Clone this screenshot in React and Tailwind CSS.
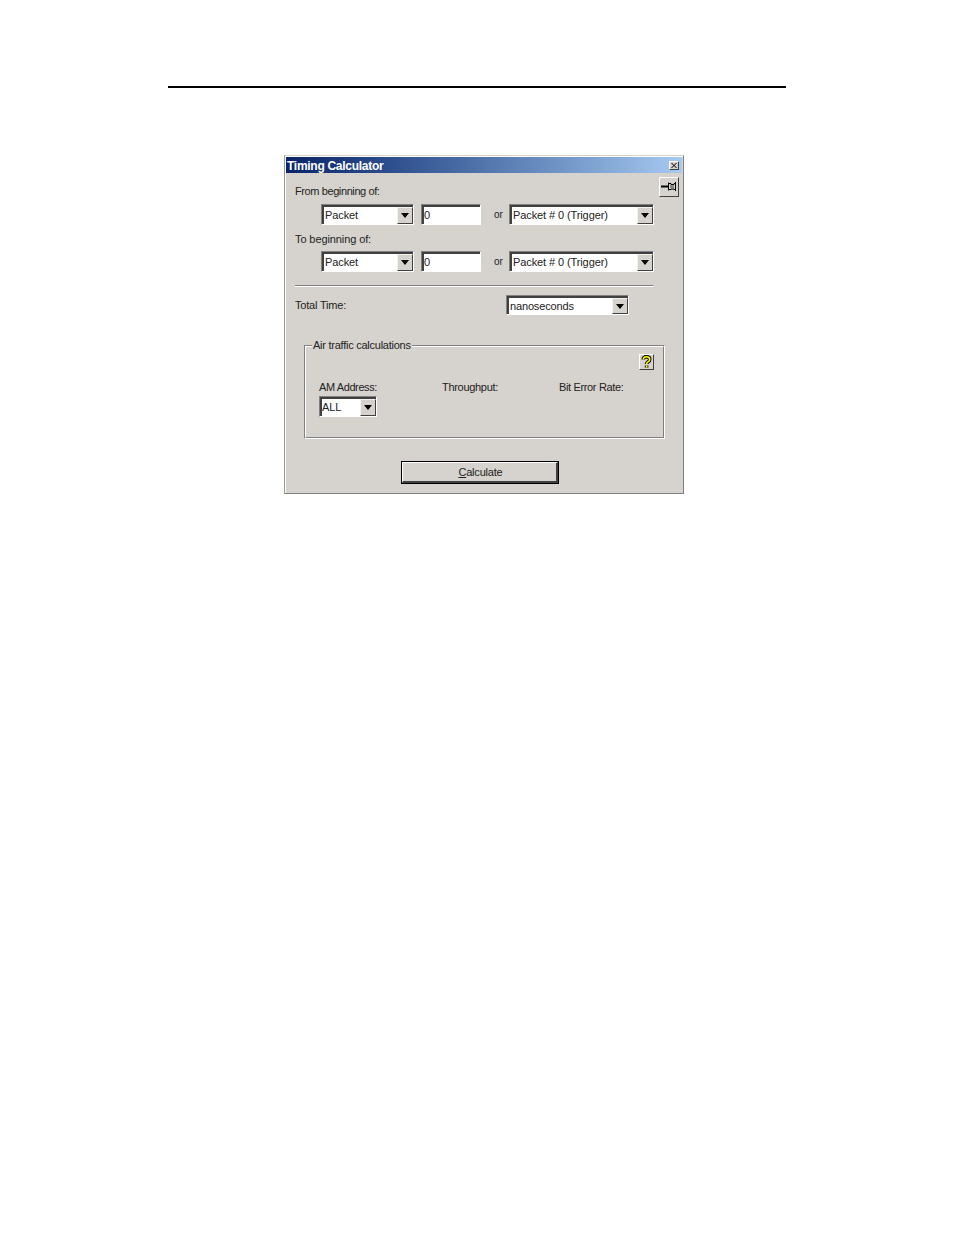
import React from "react";

const ui = "font-['Liberation_Sans',Arial,sans-serif]";
const face = "bg-[#d6d3ce]";
const raised = "border border-t-white border-l-white border-r-[#404040] border-b-[#404040]";

function Arrow() {
  return (
    <svg width="8" height="5" viewBox="0 0 8 5" className="block">
      <path d="M0 0h8L4 5z" fill="#000" />
    </svg>
  );
}

function Sunken({ className = "", children }) {
  return (
    <div className={`border border-t-[#808080] border-l-[#808080] border-r-white border-b-white ${className}`}>
      <div className="h-full border-t-2 border-l-2 border-t-[#404040] border-l-[#404040] bg-white flex items-center overflow-hidden">
        {children}
      </div>
    </div>
  );
}

function Combo({ value, className = "", textClass = "pl-[1px]", tracking = "tracking-[-0.1px]" }) {
  return (
    <Sunken className={className}>
      <span className={`flex-1 text-[11px] leading-none text-[#222] whitespace-nowrap ${tracking} ${textClass}`}>{value}</span>
      <div className={`w-4 h-full shrink-0 ${face} border border-t-[#f4f3ef] border-l-[#f4f3ef] border-r-[#404040] border-b-[#404040] flex items-center justify-center`}>
        <Arrow />
      </div>
    </Sunken>
  );
}

function Label({ children, className = "" }) {
  return <div className={`text-[11px] leading-[14px] text-[#222] whitespace-nowrap ${className}`}>{children}</div>;
}

function Row({ className = "" }) {
  return (
    <div className={`flex items-center h-[21px] ${className}`}>
      <Combo value="Packet" className="w-[93px] h-[21px] ml-[26px]" />
      <Sunken className="w-[60px] h-[21px] ml-[7px]">
        <span className="text-[11px] leading-none text-[#222]">0</span>
      </Sunken>
      <span className="ml-[13px] w-[15px] text-[10px] leading-none text-[#222]">or</span>
      <Combo value="Packet # 0 (Trigger)" className="w-[145px] h-[21px]" />
    </div>
  );
}

export default function App() {
  return (
    <div className={`min-h-[1235px] bg-white pt-[86px] ${ui}`}>
      <div className="mx-[168px] h-[2px] bg-black" />
      <div className={`ml-[284px] mt-[67px] w-[400px] h-[339px] ${face} border border-t-[#d6d3ce] border-l-[#9a9890] border-r-[#808080] border-b-[#808080]`}>
        <div className="h-full border-t border-l border-t-white border-l-white pr-[1px] pb-[1px]">
          <div className="h-[16px] bg-gradient-to-r from-[#0a246a] to-[#a6caf0] flex items-center justify-between pl-[1px] pr-[3px]">
            <span className="pt-[1px] text-[12px] leading-none font-bold tracking-[-0.28px] text-white whitespace-nowrap">Timing Calculator</span>
            <div className={`w-[10px] h-[9px] ${face} ${raised} flex items-center justify-center`}>
              <svg width="6" height="5" viewBox="0 0 6 5" className="block">
                <path d="M0.5 0L5.5 5M5.5 0L0.5 5" stroke="#000" strokeWidth="1" />
              </svg>
            </div>
          </div>

          <div className="relative pl-[9px] pr-[28px] pt-[11px]">
            <div className={`absolute right-[3px] top-[4px] w-[20px] h-[20px] ${face} ${raised} flex items-center justify-center`}>
              <svg width="16" height="12" viewBox="0 0 16 12" className="block">
                <path d="M0 5.5h7" stroke="#000" strokeWidth="2" fill="none" />
                <path d="M7.5 1.5v8M14.5 1v9M8 2.5h2V3.5h3V2.5h1M8 8.5h2V8h3v.5h1" stroke="#000" strokeWidth="1" fill="none" />
                <path d="M9 4h4v3H9z" fill="#8c8a80" />
              </svg>
            </div>

            <Label className="tracking-[-0.4px]">From beginning of:</Label>
            <Row className="mt-[6px]" />
            <Label className="mt-[7px] tracking-[-0.1px]">To beginning of:</Label>
            <Row className="mt-[5px]" />
            <div className="mt-[13px] mr-[1px] h-[2px] border-t border-t-[#808080] border-b border-b-white" />
            <div className="flex items-center h-[20px] mt-[8px]">
              <Label className="w-[211px] tracking-[-0.2px]">Total Time:</Label>
              <Combo value="nanoseconds" tracking="tracking-[-0.15px]" className="w-[123px] h-[20px]" />
            </div>
          </div>

          <div className="relative ml-[18px] mt-[30px] w-[361px] h-[94px] border border-t-[#808080] border-l-[#808080] border-r-white border-b-white">
            <div className="h-full border border-t-white border-l-white border-r-[#808080] border-b-[#808080] pl-[13px]">
              <div className={`absolute left-[7px] top-[-8px] px-[1px] ${face} text-[11px] leading-[14px] tracking-[-0.25px] text-[#222] whitespace-nowrap`}>Air traffic calculations</div>
              <div className="flex justify-end pr-[9px] pt-[7px]">
                <div className={`w-[15px] h-[16px] ${face} ${raised} flex items-center justify-center`}>
                  <svg width="11" height="14" viewBox="0 0 11 14" className="block">
                    <path d="M2.3 4.5C2.3 2.6 3.7 1.8 5.5 1.8s3.2 1 3.2 2.6c0 1.3-.8 1.9-1.7 2.5-.9.6-1.4 1-1.4 2.1M5.6 10.6v1.8" stroke="#000" strokeWidth="3.6" fill="none" />
                    <path d="M2.3 4.5C2.3 2.6 3.7 1.8 5.5 1.8s3.2 1 3.2 2.6c0 1.3-.8 1.9-1.7 2.5-.9.6-1.4 1-1.4 2.1M5.6 10.6v1.8" stroke="#ffff00" strokeWidth="1.6" fill="none" />
                  </svg>
                </div>
              </div>
              <div className="flex mt-[10px]">
                <div className="w-[123px]">
                  <Label className="tracking-[-0.4px]">AM Address:</Label>
                  <Combo value="ALL" textClass="pl-0" className="mt-[2px] w-[58px] h-[21px]" />
                </div>
                <Label className="w-[117px] tracking-[-0.3px]">Throughput:</Label>
                <Label className="tracking-[-0.35px]">Bit Error Rate:</Label>
              </div>
            </div>
          </div>

          <div className="mt-[22px] ml-[115px] w-[158px] h-[23px] bg-black p-[1px]">
            <div className={`h-full ${face} border border-t-white border-l-white border-r-[#404040] border-b-[#404040] border-r-2 border-b-2 pl-[2px] flex items-center justify-center text-[11px] leading-none tracking-[-0.2px] text-[#222]`}>
              <span><span className="underline">C</span>alculate</span>
            </div>
          </div>
        </div>
      </div>
    </div>
  );
}
